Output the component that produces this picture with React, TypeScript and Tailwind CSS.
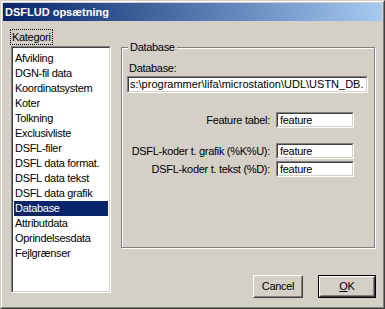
import React from "react";

const items = [
  "Afvikling",
  "DGN-fil data",
  "Koordinatsystem",
  "Koter",
  "Tolkning",
  "Exclusivliste",
  "DSFL-filer",
  "DSFL data format.",
  "DSFL data tekst",
  "DSFL data grafik",
  "Database",
  "Attributdata",
  "Oprindelsesdata",
  "Fejlgrænser",
];

function Sunken({ className, children }: { className?: string; children?: React.ReactNode }) {
  return (
    <div className={"border border-t-[#808080] border-l-[#808080] border-r-white border-b-white " + (className ?? "")}>
      <div className="h-full w-full border border-t-[#404040] border-l-[#404040] border-r-[#d4d0c8] border-b-[#d4d0c8] bg-white overflow-hidden">
        {children}
      </div>
    </div>
  );
}

function Field({ label, value }: { label: string; value: string }) {
  return (
    <div className="flex flex-row items-center">
      <div className="w-[143px] text-right text-[11px] leading-[13px] tracking-[-0.3px] whitespace-nowrap">{label}</div>
      <Sunken className="ml-[6px] w-[78px] h-[16px]">
        <div className="pl-[2px] text-[11px] leading-[12px] tracking-[-0.3px] whitespace-nowrap">{value}</div>
      </Sunken>
    </div>
  );
}

export default function App() {
  return (
    <div className="w-[385px] h-[309px] bg-[#d4d0c8] border border-t-[#d4d0c8] border-l-[#d4d0c8] border-r-[#404040] border-b-[#404040] font-['Liberation_Sans',Arial,sans-serif] text-black overflow-hidden">
      <div className="h-full border border-t-white border-l-white border-r-[#808080] border-b-[#808080] p-[1px] flex flex-col">
        <div className="h-[18px] shrink-0 bg-linear-to-r from-[#0a246a] to-[#a6caf0] flex items-center pl-[2px]">
          <span className="text-white font-bold text-[11px] leading-[13px]">DSFLUD opsætning</span>
        </div>
        <div className="flex flex-row items-start pt-[8px] pl-[7px] gap-[10px]">
          <div className="w-[101px] flex flex-col">
            <div className="self-start h-[16px] border border-dotted border-black px-[1px] text-[11px] leading-[14px] tracking-[-0.3px]">
              Kategori
            </div>
            <Sunken className="ml-[1px] mt-[1px] w-[100px] h-[247px]">
              <div className="flex flex-col pt-[3px] px-[1px]">
                {items.map((it) => (
                  <div
                    key={it}
                    className={
                      "h-[15px] text-[11px] leading-[15px] tracking-[-0.3px] whitespace-nowrap pl-[1px] " +
                      (it === "Database" ? "bg-[#0a246a] text-white" : "")
                    }
                  >
                    {it}
                  </div>
                ))}
              </div>
            </Sunken>
          </div>
          <div className="w-[254px] flex flex-col pt-[18px]">
            <div className="relative h-[201px] border border-[#808080] shadow-[inset_1px_1px_0_#fff,1px_1px_0_#fff]">
              <span className="absolute left-[6px] top-[-7px] px-[2px] bg-[#d4d0c8] text-[11px] leading-[13px] tracking-[-0.3px]">
                Database
              </span>
              <div className="flex flex-col pt-[14px] px-[5px]">
                <div className="ml-[2px] text-[11px] leading-[13px] tracking-[-0.3px]">Database:</div>
                <Sunken className="mt-[1px] w-[241px] h-[17px]">
                  <div className="pl-[1px] text-[11px] leading-[13px] whitespace-nowrap">
                    s:\programmer\lifa\microstation\UDL\USTN_DB.
                  </div>
                </Sunken>
                <div className="mt-[19px]">
                  <Field label="Feature tabel:" value="feature" />
                </div>
                <div className="mt-[15px]">
                  <Field label="DSFL-koder t. grafik (%K%U):" value="feature" />
                </div>
                <div className="mt-[2px]">
                  <Field label="DSFL-koder t. tekst (%D):" value="feature" />
                </div>
              </div>
            </div>
            <div className="flex flex-row justify-end items-start gap-[15px] mt-[27px] pr-0">
              <button className="w-[50px] h-[23px] border border-t-white border-l-white border-r-[#404040] border-b-[#404040] bg-[#d4d0c8] p-0">
                <div className="h-full w-full border border-t-[#d4d0c8] border-l-[#d4d0c8] border-r-[#808080] border-b-[#808080] flex items-center justify-center text-[11px] leading-[13px] tracking-[-0.3px]">
                  Cancel
                </div>
              </button>
              <button className="w-[58px] h-[23px] border border-black bg-[#d4d0c8] p-0 -mr-[1px]">
                <div className="h-full w-full border border-t-white border-l-white border-r-[#404040] border-b-[#404040]">
                  <div className="h-full w-full border border-t-[#d4d0c8] border-l-[#d4d0c8] border-r-[#808080] border-b-[#808080] flex items-center justify-center text-[11px] leading-[13px] tracking-[-0.3px]">
                    <span><span className="underline">O</span>K</span>
                  </div>
                </div>
              </button>
            </div>
          </div>
        </div>
      </div>
    </div>
  );
}
